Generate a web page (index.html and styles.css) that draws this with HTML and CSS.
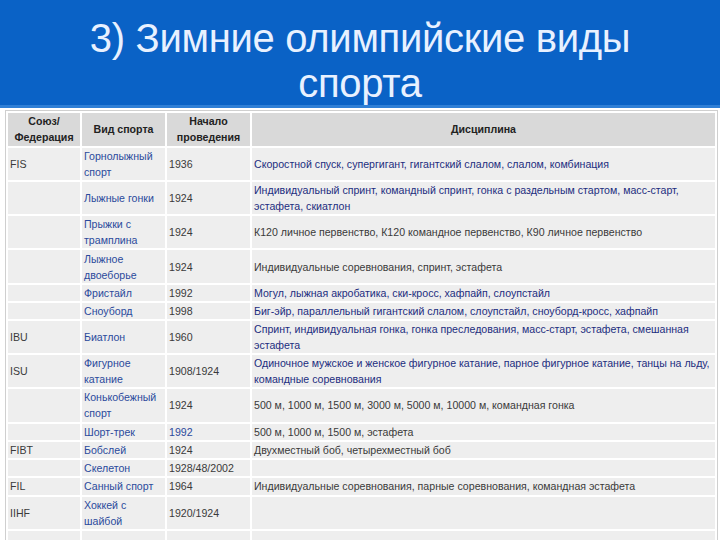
FILE: index.html
```html
<!DOCTYPE html>
<html lang="ru">
<head>
<meta charset="utf-8">
<title>Зимние олимпийские виды спорта</title>
<link rel="stylesheet" href="styles.css">
</head>
<body>
<div class="slide">
  <header class="title-band">
    <h1 class="title">3) Зимние олимпийские виды<br>спорта</h1>
  </header>
  <table class="sports">
    <colgroup>
      <col class="c1"><col class="c2"><col class="c3"><col class="c4">
    </colgroup>
    <thead>
      <tr><th>Союз/<br>Федерация</th><th>Вид спорта</th><th>Начало<br>проведения</th><th>Дисциплина</th></tr>
    </thead>
    <tbody>
      <tr class="two"><td>FIS</td><td class="lnk">Горнолыжный спорт</td><td>1936</td><td class="nav">Скоростной спуск, супергигант, гигантский слалом, слалом, комбинация</td></tr>
      <tr class="two"><td></td><td class="lnk">Лыжные гонки</td><td>1924</td><td class="nav">Индивидуальный спринт, командный спринт, гонка с раздельным стартом, масс-старт, эстафета, скиатлон</td></tr>
      <tr class="two"><td></td><td class="lnk">Прыжки с трамплина</td><td>1924</td><td>К120 личное первенство, К120 командное первенство, К90 личное первенство</td></tr>
      <tr class="two"><td></td><td class="lnk">Лыжное двоеборье</td><td>1924</td><td>Индивидуальные соревнования, спринт, эстафета</td></tr>
      <tr><td></td><td class="lnk">Фристайл</td><td>1992</td><td class="nav">Могул, лыжная акробатика, ски-кросс, хафпайп, слоупстайл</td></tr>
      <tr><td></td><td class="lnk">Сноуборд</td><td>1998</td><td class="nav">Биг-эйр, параллельный гигантский слалом, слоупстайл, сноуборд-кросс, хафпайп</td></tr>
      <tr class="two"><td>IBU</td><td class="lnk">Биатлон</td><td>1960</td><td class="nav">Спринт, индивидуальная гонка, гонка преследования, масс-старт, эстафета, смешанная эстафета</td></tr>
      <tr class="two"><td>ISU</td><td class="lnk">Фигурное катание</td><td>1908/1924</td><td class="nav">Одиночное мужское и женское фигурное катание, парное фигурное катание, танцы на льду, командные соревнования</td></tr>
      <tr class="two"><td></td><td class="lnk">Конькобежный спорт</td><td>1924</td><td>500 м, 1000 м, 1500 м, 3000 м, 5000 м, 10000 м, командная гонка</td></tr>
      <tr><td></td><td class="lnk">Шорт-трек</td><td class="lnk">1992</td><td>500 м, 1000 м, 1500 м, эстафета</td></tr>
      <tr><td>FIBT</td><td class="lnk">Бобслей</td><td>1924</td><td>Двухместный боб, четырехместный боб</td></tr>
      <tr><td></td><td class="lnk">Скелетон</td><td>1928/48/2002</td><td></td></tr>
      <tr class="tall"><td>FIL</td><td class="lnk">Санный спорт</td><td>1964</td><td>Индивидуальные соревнования, парные соревнования, командная эстафета</td></tr>
      <tr class="two"><td>IIHF</td><td class="lnk">Хоккей с шайбой</td><td>1920/1924</td><td></td></tr>
      <tr class="two"><td>WCF</td><td class="lnk">Кёрлинг</td><td>1924/1998</td><td></td></tr>
    </tbody>
  </table>
</div>
</body>
</html>
```

FILE: styles.css
```css
html, body {
  margin: 0;
  padding: 0;
  overflow: hidden;
  background: #ffffff;
}

.slide {
  width: 720px;
  height: 540px;
  overflow: hidden;
  font-family: "Liberation Sans", Arial, sans-serif;
}

.title-band {
  background: #0a62c6;
  border-bottom: 3px solid #2f7fd6;
  padding-top: 16px;
  height: 89px;
}

.title {
  margin: 0;
  font-weight: normal;
  font-size: 40px;
  line-height: 45px;
  color: #e8f1ff;
  text-align: center;
  letter-spacing: -0.3px;
}

.sports {
  margin: 2px 0 0 5px;
  width: 713px;
  table-layout: fixed;
  border: 1px solid #cfcfcf;
  border-spacing: 2px;
  font-size: 10.6px;
  line-height: 16px;
  color: #3a3a3a;
}

.c1 { width: 72px; }
.c2 { width: 83px; }
.c3 { width: 83px; }

.sports th {
  background: #d9d9d9;
  color: #222;
  font-weight: bold;
  text-align: center;
  padding: 0 2px;
  height: 32.5px;
}

.sports td {
  background: #eeeeee;
  padding: 0 2px;
  vertical-align: middle;
  text-align: left;
}

.sports tr.two td {
  height: 32.3px;
}

.sports tr.tall td {
  height: 17px;
}

.sports td.lnk {
  color: #2b4a9c;
}

.sports td.nav {
  color: #1c2d7e;
}
```
